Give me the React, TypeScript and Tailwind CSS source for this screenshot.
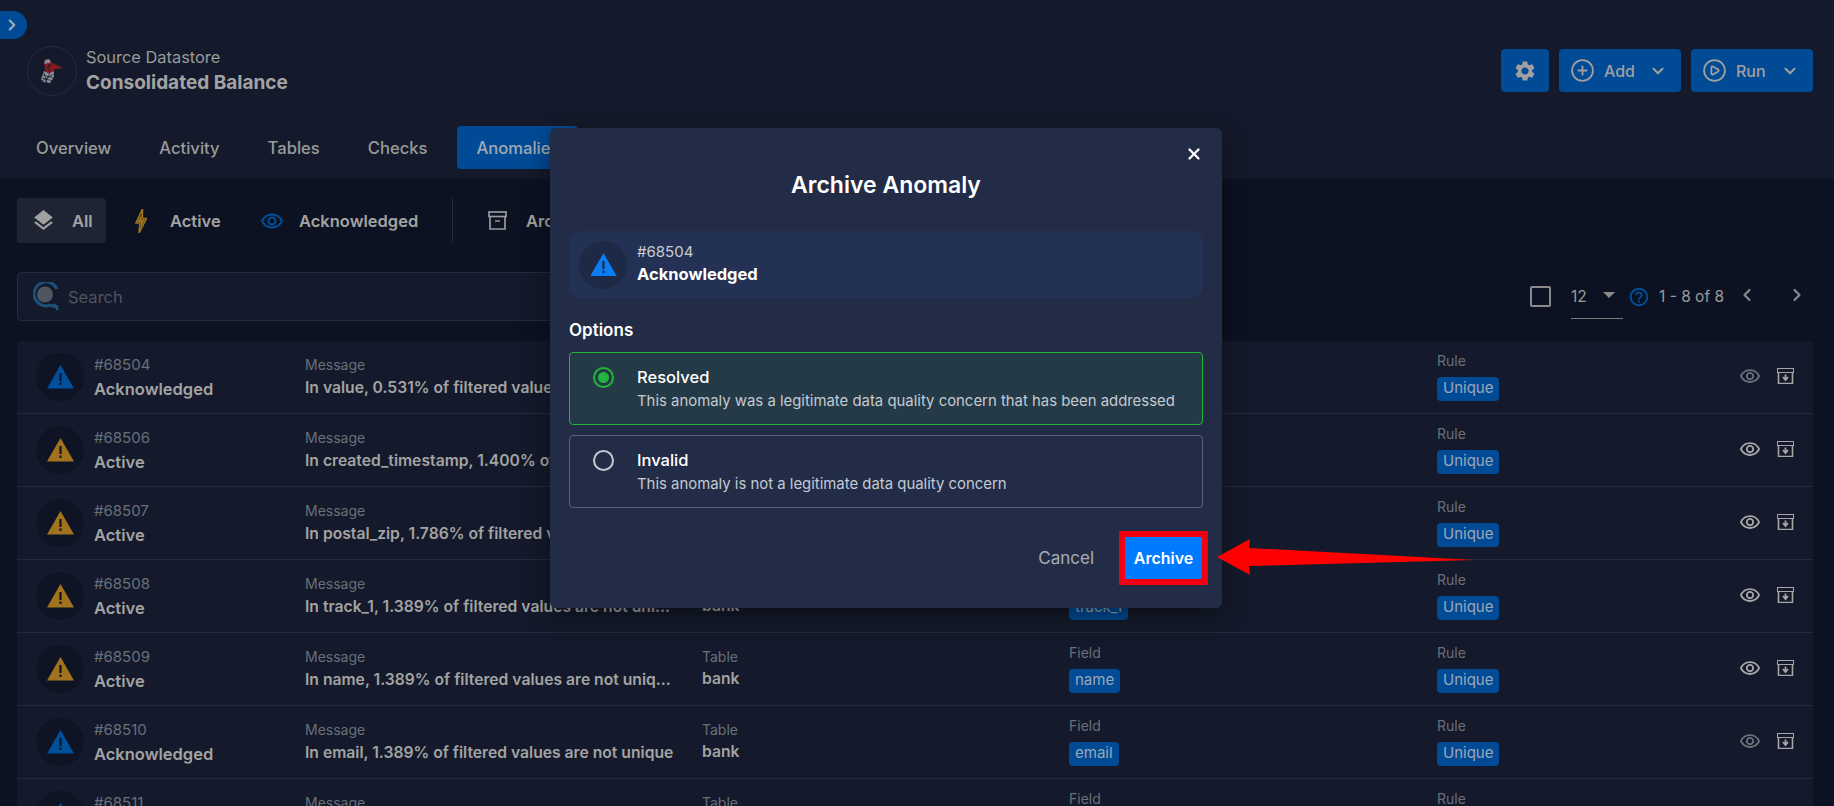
import React from "react";
import { CirclePlus, CirclePlay, ChevronDown, ChevronLeft, ChevronRight, X } from "lucide-react";
import { MdSettings, MdOutlineRemoveRedEye, MdHelpOutline, MdLayers } from "react-icons/md";

const Tri = ({ color, mark, w = 27 }: { color: string; mark: string; w?: number }) => (
  <svg width={w} height={w * 0.87} viewBox="0 0 27 23.5">
    <path d="M13.5 0 L27 23.5 H0 Z" fill={color} />
    <rect x="12.4" y="8" width="2.2" height="8" fill={mark} />
    <rect x="12.4" y="17.5" width="2.2" height="2.4" fill={mark} />
  </svg>
);

const ArchiveDown = ({ color }: { color: string }) => (
  <svg width="17" height="16" viewBox="0 0 17 16" fill="none">
    <rect x="0.5" y="0.5" width="16" height="4" stroke={color} />
    <path d="M1.5 4.5 V15.5 H15.5 V4.5" stroke={color} strokeWidth="1.6" />
    <path d="M8.5 6.5 V11 M6 9 L8.5 12 L11 9" stroke={color} strokeWidth="1.8" />
  </svg>
);

const Badge = ({ children }: { children: React.ReactNode }) => (
  <span className="inline-block h-6 leading-[22px] px-[6px] rounded bg-[#014b96] text-[#9aa7b8] text-[15px] whitespace-nowrap">
    {children}
  </span>
);

type Row = { id: string; status: string; msg: string; field: string; brightEye: boolean };
const rows: Row[] = [
  { id: "#68504", status: "Acknowledged", msg: "In value, 0.531% of filtered values are not unique", field: "value", brightEye: false },
  { id: "#68506", status: "Active", msg: "In created_timestamp, 1.400% of filtered values are not unique", field: "created_timestamp", brightEye: true },
  { id: "#68507", status: "Active", msg: "In postal_zip, 1.786% of filtered values are not unique", field: "postal_zip", brightEye: true },
  { id: "#68508", status: "Active", msg: "In track_1, 1.389% of filtered values are not uni...", field: "track_1", brightEye: true },
  { id: "#68509", status: "Active", msg: "In name, 1.389% of filtered values are not uniq...", field: "name", brightEye: true },
  { id: "#68510", status: "Acknowledged", msg: "In email, 1.389% of filtered values are not unique", field: "email", brightEye: false },
  { id: "#68511", status: "Acknowledged", msg: "In phone, 1.389% of filtered values are not unique", field: "phone", brightEye: false },
];

const Label = ({ children }: { children: React.ReactNode }) => (
  <div className="text-[14px] leading-[18px] text-[#6b6f79]">{children}</div>
);

const AnomalyRow = ({ r }: { r: Row }) => {
  const ack = r.status === "Acknowledged";
  return (
    <div className="h-[73px] shrink-0 flex border-b border-[#262b3b] pl-[19px]">
      <div className="w-[269px] shrink-0 flex items-start pt-[12px] gap-[10px]">
        <div className="w-12 h-12 rounded-full bg-[#0e1424] flex items-center justify-center">
          <Tri color={ack ? "#01509c" : "#a2731f"} mark="#0e1424" />
        </div>
        <div className="pt-[2px]">
          <div className="text-[15px] leading-5 text-[#6b6f79]">{r.id}</div>
          <div className="text-[16.5px] leading-[24px] mt-[2px] font-semibold text-[#a3a3a3]">{r.status}</div>
        </div>
      </div>
      <div className="w-[397px] shrink-0 pt-[15px]">
        <Label>Message</Label>
        <div className="w-[370px] truncate text-[15.7px] leading-[24px] mt-[2px] font-semibold text-[#a3a3a3]">{r.msg}</div>
      </div>
      <div className="w-[367px] shrink-0 pt-[15px]">
        <Label>Table</Label>
        <div className="text-[15.7px] leading-[24px] mt-[1px] font-semibold text-[#a3a3a3]">bank</div>
      </div>
      <div className="w-[368px] shrink-0 pt-[11px]">
        <Label>Field</Label>
        <div className="mt-[5px]"><Badge>{r.field}</Badge></div>
      </div>
      <div className="w-[302px] shrink-0 pt-[11px]">
        <Label>Rule</Label>
        <div className="mt-[5px]"><Badge>Unique</Badge></div>
      </div>
      <div className="flex items-center h-[70px] gap-[16px]">
        <MdOutlineRemoveRedEye size={22} color={r.brightEye ? "#a6a6a6" : "#6d7078"} />
        <ArchiveDown color="#a6a6a6" />
      </div>
    </div>
  );
};

export default function App() {
  return (
    <div className="relative w-[1834px] h-[806px] overflow-hidden bg-[#0c1221] font-[Inter,sans-serif] text-[#a3a3a3]">
      {/* Sidebar toggle */}
      <div className="absolute left-0 top-[11px] w-[27px] h-[28px] rounded-r-full bg-[#014b96] flex items-center pl-[3px] text-[#a0a8b4]">
        <ChevronRight size={18} strokeWidth={3} />
      </div>

      {/* Header */}
      <header className="h-[179px] bg-[#141a2b] flex flex-col">
        <div className="flex justify-between items-start pt-[46px] pl-[27px] pr-[21px]">
          <div className="flex items-center gap-[9px]">
            <div className="w-[50px] h-[50px] rounded-full border border-[#262b3b] flex items-center justify-center">
              <svg width="22" height="24" viewBox="0 0 22 24">
                <path d="M4 1 L8 0 L10 3 L9 5 L3 5 Z" fill="#8a8b90" />
                <path d="M3 5 L10 3.5 L22 9 L14 10 L9 15 L5 13 Z" fill="#8a1a1f" />
                <path d="M3 12 L8 14.5 L13 12 L13 18 L9 24 L2 23 L0 20 Z" fill="#8f9096" />
                <path d="M1 19 L12 22 M3 14 L6 24 M9 14 L4 24 M1 22 L13 15 M2 16 L13 19 M5 9 L12 5 M8 13 L8 5" stroke="#141a2b" strokeWidth="0.7" />
              </svg>
            </div>
            <div>
              <div className="text-[16.4px] leading-5 text-[#9a9a9a]">Source Datastore</div>
              <div className="text-[19px] leading-[26px] mt-[3px] font-bold text-[#a3a3a3]">Consolidated Balance</div>
            </div>
          </div>
          <div className="flex gap-[10px] mt-[3px] text-[#a0a0a0]">
            <div className="w-12 h-[43px] rounded bg-[#014b96] flex items-center justify-center">
              <MdSettings size={24} color="#a0a0a0" />
            </div>
            <div className="w-[122px] h-[43px] rounded bg-[#014b96] flex items-center pl-[11px] text-[16px] font-medium">
              <CirclePlus size={25} strokeWidth={1.7} />
              <span className="ml-[9px] w-[45px]">Add</span>
              <ChevronDown size={18} strokeWidth={2.8} />
            </div>
            <div className="w-[122px] h-[43px] rounded bg-[#014b96] flex items-center pl-[11px] text-[16px] font-medium">
              <CirclePlay size={25} strokeWidth={1.7} />
              <span className="ml-[9px] w-[45px]">Run</span>
              <ChevronDown size={18} strokeWidth={2.8} />
            </div>
          </div>
        </div>
        <nav className="flex gap-[10px] mt-[30px] pl-[17px] text-[16.6px] font-medium text-[#9a9a9a]">
          {["Overview", "Activity", "Tables", "Checks"].map((t) => (
            <div key={t} className="h-[43px] px-[19px] pt-[2px] flex items-center">{t}</div>
          ))}
          <div className="h-[43px] w-[121px] ml-px px-[19px] pt-[2px] flex items-center rounded bg-[#014b96] text-[#a3aab5]">Anomalies</div>
        </nav>
      </header>

      {/* Filter row */}
      <div className="flex items-center h-[45px] mt-[19px] ml-[17px] text-[16.5px] font-semibold">
        <div className="h-[45px] w-[89px] pl-[14px] flex items-center gap-[16px] rounded bg-[#1f2433]">
          <MdLayers size={25} color="#a0a0a0" />
          <span className="pt-px">All</span>
        </div>
        <div className="flex items-center ml-[29px] w-[125px]">
          <svg width="12" height="24" viewBox="0 0 12 24">
            <path d="M7.5 0 L1 14 H5 L4 24 L11.5 9.5 H7.3 Z" fill="none" stroke="#a2731f" strokeWidth="1.6" />
            <path d="M6.5 5 L2.5 13 H6 L5 20 L10 10.5 H6.5 Z" fill="#a2731f" />
          </svg>
          <span className="ml-[23px] pt-px">Active</span>
        </div>
        <div className="flex items-center w-[192px]">
          <MdOutlineRemoveRedEye size={24} color="#014f9d" />
          <span className="ml-[15px] pt-px">Acknowledged</span>
        </div>
        <div className="h-[45px] w-px bg-[#262b3b]" />
        <div className="flex items-center ml-[35px]">
          <svg width="19" height="19" viewBox="0 0 19 19" fill="none" stroke="#9a9a9a" strokeWidth="1.7">
            <rect x="1" y="1" width="17" height="4.5" />
            <path d="M2 5.5 V18 H17 V5.5 M7 10 H12" />
          </svg>
          <span className="ml-[19px] pt-px">Archived</span>
        </div>
      </div>

      {/* Search + pagination */}
      <div className="flex justify-between items-center h-[49px] mt-[29px] pl-[17px] pr-[27px]">
        <div className="w-[1000px] h-[49px] rounded border border-[#262b3b] bg-[#141a2b] flex items-center pl-[15px]">
          <svg width="27" height="29" viewBox="0 0 27 29" fill="none">
            <circle cx="12" cy="12.5" r="8" fill="#4f5561" />
            <path d="M24 7 A12 12 0 1 0 16 23.5" stroke="#1d5078" strokeWidth="3" />
            <path d="M15 23 L25 25 M21 22 L25 28" stroke="#1d5078" strokeWidth="3" />
          </svg>
          <span className="ml-[8px] pt-px text-[16.5px] text-[#50545f]">Search</span>
        </div>
        <div className="flex items-center text-[#9a9a9a] text-[15.5px]">
          <div className="w-[21px] h-[21px] border-2 border-[#8a8a8a] rounded-[2px]" />
          <div className="ml-[20px] w-[52px] h-[44px] relative flex items-center border-b border-[#7a7a7a]">
            <span className="pt-[2px]">12</span>
            <div className="absolute left-[32px] top-[17px] w-0 h-0 border-x-[6px] border-x-transparent border-t-[6px] border-t-[#8a8a8a]" />
          </div>
          <MdHelpOutline size={22} color="#014f9d" className="ml-[5px]" />
          <span className="ml-[9px] pt-px w-[62px] whitespace-nowrap">1 - 8 of 8</span>
          <ChevronLeft size={20} strokeWidth={2.6} className="ml-[16px] -mt-[4px] text-[#8a8a8a]" />
          <ChevronRight size={20} strokeWidth={2.6} className="ml-[30px] -mt-[4px] text-[#8a8a8a]" />
        </div>
      </div>

      {/* List */}
      <div className="mt-[20px] ml-[17px] mr-[21px] bg-[#141a2b] rounded-t flex flex-col">
        {rows.map((r) => (
          <AnomalyRow key={r.id} r={r} />
        ))}
      </div>

      {/* Modal */}
      <div className="absolute left-[550px] top-[128px] w-[672px] h-[480px] rounded-md bg-[#222c47] shadow-[0_8px_28px_rgba(0,0,0,0.45)] px-[19px] flex flex-col text-white">
        <button className="absolute right-[19px] top-[17px] text-white">
          <X size={18} strokeWidth={3} />
        </button>
        <h2 className="text-center text-[23px] leading-8 font-semibold mt-[41px]">Archive Anomaly</h2>
        <div className="h-[67px] mt-[30px] rounded-xl bg-[#233254] flex items-center pl-[10px] gap-[10px]">
          <div className="w-12 h-12 rounded-full bg-[#1e2a45] flex items-center justify-center">
            <Tri color="#0a7cf5" mark="#1e2a45" />
          </div>
          <div className="pb-[2px]">
            <div className="text-[15px] leading-5 text-[#c9ccd3]">#68504</div>
            <div className="text-[16.5px] leading-6 font-bold">Acknowledged</div>
          </div>
        </div>
        <div className="text-[17px] leading-6 font-semibold mt-[20px]">Options</div>
        <div className="h-[73px] mt-[10px] rounded border border-[#22b53c] bg-[#243a46] flex pl-[23px] pt-[12px]">
          <div className="w-[21px] h-[21px] mt-[2px] rounded-full border-2 border-[#22b53c] flex items-center justify-center">
            <div className="w-[11px] h-[11px] rounded-full bg-[#22b53c]" />
          </div>
          <div className="ml-[23px]">
            <div className="text-[16.5px] leading-6 font-medium">Resolved</div>
            <div className="text-[14.9px] leading-5 mt-[2px] text-[#c4c9d2] whitespace-nowrap">This anomaly was a legitimate data quality concern that has been addressed</div>
          </div>
        </div>
        <div className="h-[73px] mt-[10px] rounded border border-[#5a6275] flex pl-[23px] pt-[12px]">
          <div className="w-[21px] h-[21px] mt-[2px] rounded-full border-2 border-[#c4c9d2]" />
          <div className="ml-[23px]">
            <div className="text-[16.5px] leading-6 font-medium">Invalid</div>
            <div className="text-[14.9px] leading-5 mt-[2px] text-[#c4c9d2]">This anomaly is not a legitimate data quality concern</div>
          </div>
        </div>
        <div className="flex justify-end items-center mt-[23px] -mr-[5px]">
          <span className="pt-[2px] text-[17px] text-[#a8adb8]">Cancel</span>
          <div className="ml-[25px] border-[6px] border-[#f2000f]">
            <div className="w-[77px] h-[42px] bg-[#007bff] flex items-center justify-center text-[16px] font-semibold">Archive</div>
          </div>
        </div>
      </div>

      {/* Annotation arrow */}
      <svg className="absolute left-[1215px] top-[535px]" width="265" height="45" viewBox="0 0 265 45">
        <path d="M2 22 L35 4 L34 13 L260 25 L34 31 L35 40 Z" fill="#ff0000" />
      </svg>
    </div>
  );
}
